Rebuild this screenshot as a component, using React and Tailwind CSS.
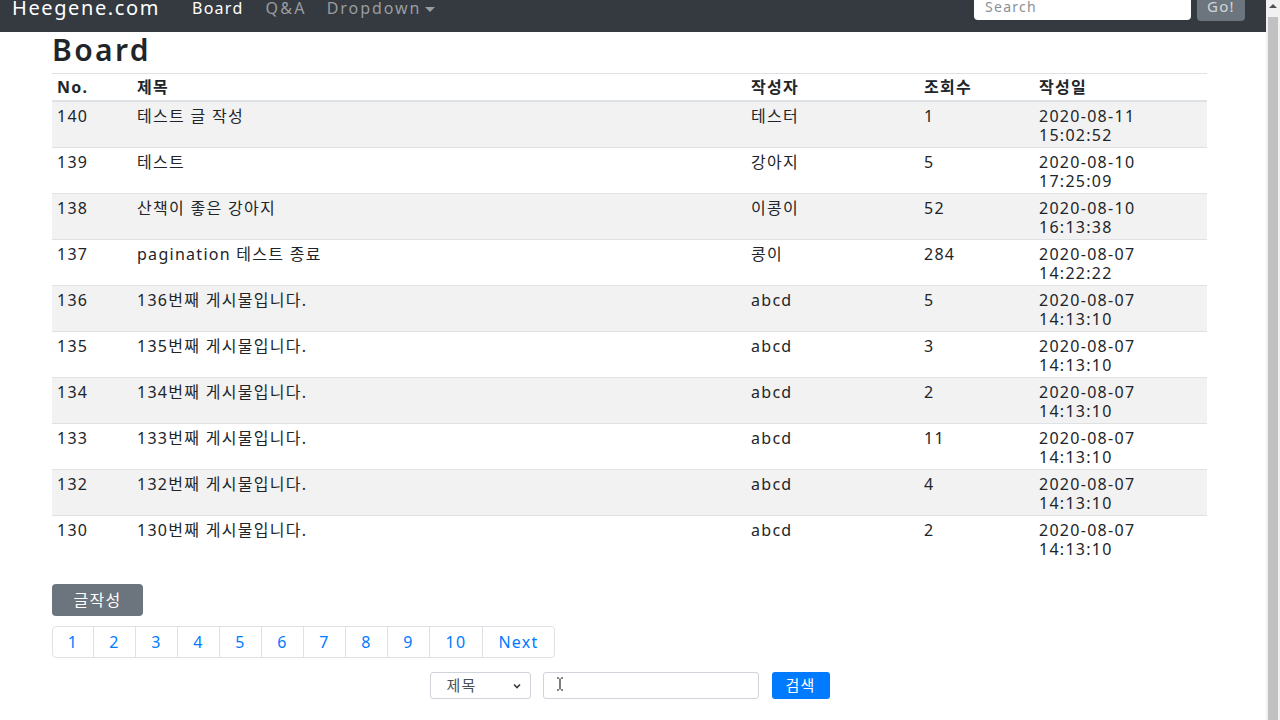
import React from 'react';

const rows = [
  { no: 140, title: '테스트 글 작성', writer: '테스터', hit: 1, date: '2020-08-11', time: '15:02:52' },
  { no: 139, title: '테스트', writer: '강아지', hit: 5, date: '2020-08-10', time: '17:25:09' },
  { no: 138, title: '산책이 좋은 강아지', writer: '이콩이', hit: 52, date: '2020-08-10', time: '16:13:38' },
  { no: 137, title: 'pagination 테스트 종료', writer: '콩이', hit: 284, date: '2020-08-07', time: '14:22:22' },
  { no: 136, title: '136번째 게시물입니다.', writer: 'abcd', hit: 5, date: '2020-08-07', time: '14:13:10' },
  { no: 135, title: '135번째 게시물입니다.', writer: 'abcd', hit: 3, date: '2020-08-07', time: '14:13:10' },
  { no: 134, title: '134번째 게시물입니다.', writer: 'abcd', hit: 2, date: '2020-08-07', time: '14:13:10' },
  { no: 133, title: '133번째 게시물입니다.', writer: 'abcd', hit: 11, date: '2020-08-07', time: '14:13:10' },
  { no: 132, title: '132번째 게시물입니다.', writer: 'abcd', hit: 4, date: '2020-08-07', time: '14:13:10' },
  { no: 130, title: '130번째 게시물입니다.', writer: 'abcd', hit: 2, date: '2020-08-07', time: '14:13:10' },
];

const pages = ['1', '2', '3', '4', '5', '6', '7', '8', '9', '10', 'Next'];

function Navbar() {
  return (
    <nav className="h-[32px] bg-[#343a40] overflow-hidden flex items-start pl-[12px] pr-[21px]">
      <a className="text-white text-[20px] leading-[24px] -mt-[4px] tracking-[0.08em]">Heegene.com</a>
      <div className="flex items-start ml-[32px] text-[16px] leading-[24px] -mt-[4px]">
        <span className="text-white">Board</span>
        <span className="ml-[22px] text-[#9a9da0] tracking-[0.14em]">Q&amp;A</span>
        <span className="ml-[20px] text-[#9a9da0] tracking-[0.12em] flex items-center">
          Dropdown
          <span className="ml-[4px] mt-[2px] w-0 h-0 border-l-[5px] border-r-[5px] border-t-[5px] border-l-transparent border-r-transparent border-t-[#9a9da0]" />
        </span>
      </div>
      <div className="ml-auto flex items-start gap-[6px]">
        <div className="w-[217px] h-[28px] -mt-[8px] bg-white rounded-[4px] px-[11px] flex items-center text-[14px] text-[#8a9096]">
          Search
        </div>
        <button className="w-[48px] h-[30px] -mt-[9px] bg-[#6c757d] rounded-[4px] text-[15px] text-[#d3d6d9] flex items-center justify-center">
          Go!
        </button>
      </div>
    </nav>
  );
}

function Scrollbar() {
  return (
    <div className="w-[14px] h-full bg-[#f1f1f1] flex flex-col items-center">
      <div className="h-[17px] flex items-start pt-[4px]">
        <span className="w-0 h-0 border-l-[4px] border-r-[4px] border-b-[4px] border-l-transparent border-r-transparent border-b-[#505050]" />
      </div>
      <div className="w-[10px] flex-1 bg-[#c1c1c1]" />
    </div>
  );
}

export default function App() {
  return (
    <div className="w-[1280px] h-[720px] overflow-hidden flex bg-white text-[#212529] font-['Noto_Sans','Noto_Sans_CJK_KR',sans-serif] tracking-[0.08em]">
      <div className="flex-1 flex flex-col">
        <Navbar />
        <div className="ml-[52px] w-[1155px]">
          <h2 className="text-[30px] leading-[34px] font-semibold mt-px mb-[6px] tracking-[0.08em]">Board</h2>

          <table className="w-full table-fixed border-collapse text-[16px] leading-[19px]">
            <colgroup>
              <col className="w-[80px]" />
              <col className="w-[614px]" />
              <col className="w-[173px]" />
              <col className="w-[115px]" />
              <col className="w-[173px]" />
            </colgroup>
            <thead>
              <tr className="border-t border-b-2 border-[#dee2e6] text-left">
                <th className="px-[5px] pt-[4px] pb-[3px] font-bold">No.</th>
                <th className="px-[5px] pt-[4px] pb-[3px] font-bold">제목</th>
                <th className="px-[5px] pt-[4px] pb-[3px] font-bold">작성자</th>
                <th className="px-[5px] pt-[4px] pb-[3px] font-bold">조회수</th>
                <th className="px-[5px] pt-[4px] pb-[3px] font-bold">작성일</th>
              </tr>
            </thead>
            <tbody>
              {rows.map((r, i) => (
                <tr key={r.no} className={`border-t border-[#dee2e6] align-top ${i % 2 === 0 ? 'bg-[#f2f2f2]' : 'bg-white'}`}>
                  <td className="px-[5px] pt-[5px] pb-[2px]">{r.no}</td>
                  <td className="px-[5px] pt-[5px] pb-[2px] whitespace-nowrap">{r.title}</td>
                  <td className="px-[5px] pt-[5px] pb-[2px]">{r.writer}</td>
                  <td className="px-[5px] pt-[5px] pb-[2px]">{r.hit}</td>
                  <td className="px-[5px] pt-[5px] pb-[2px]">
                    <span className="block">{r.date}</span>
                    <span className="block">{r.time}</span>
                  </td>
                </tr>
              ))}
            </tbody>
          </table>

          <button className="mt-[23px] w-[91px] h-[32px] bg-[#6c757d] rounded-[4px] text-white text-[16px] flex items-center justify-center">
            글작성
          </button>

          <ul className="mt-[10px] flex text-[16px] text-[#007bff]">
            {pages.map((p, i) => (
              <li
                key={p}
                className={`h-[32px] flex items-center justify-center border border-[#dee2e6] bg-white ${
                  i === 0 ? 'w-[42px] rounded-l-[4px]' : '-ml-px'
                } ${p === '10' ? 'w-[54px]' : p === 'Next' ? 'w-[73px] rounded-r-[4px]' : i > 0 ? 'w-[43px]' : ''}`}
              >
                {p}
              </li>
            ))}
          </ul>

          <div className="mt-[14px] flex justify-center items-center text-[14px]">
            <div className="w-[101px] h-[27px] border border-[#ced4da] rounded-[3px] flex items-center justify-between pl-[16px] pr-[8px] text-[15px] text-[#495057] bg-white">
              <span>제목</span>
              <svg width="10" height="10" viewBox="0 0 10 10">
                <path d="M2 3.5 L5 6.5 L8 3.5" fill="none" stroke="#343a40" strokeWidth="1.6" />
              </svg>
            </div>
            <div className="relative ml-[12px] w-[216px] h-[27px] border border-[#ced4da] rounded-[3px] bg-white">
              <svg className="absolute left-[12px] top-[4px]" width="8" height="14" viewBox="0 0 8 14">
                <path d="M1 1 H3 M5 1 H7 M4 1.5 V12.5 M1 13 H3 M5 13 H7" fill="none" stroke="#111" strokeWidth="1.1" />
              </svg>
            </div>
            <button className="ml-[13px] w-[58px] h-[27px] bg-[#007bff] rounded-[3px] text-white text-[15px] flex items-center justify-center">
              검색
            </button>
          </div>
        </div>
      </div>
      <Scrollbar />
    </div>
  );
}
